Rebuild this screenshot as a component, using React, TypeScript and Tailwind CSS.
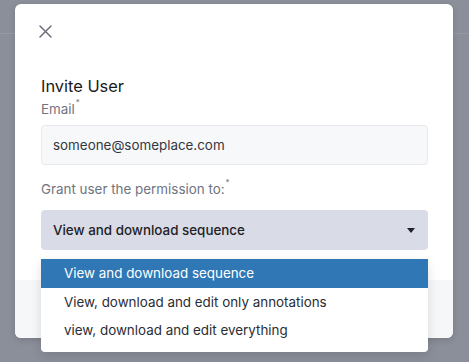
import React from "react";

export default function App() {
  return (
    <div
      className="relative w-[469px] h-[362px] overflow-hidden bg-[#8b8f99]"
      style={{ fontFamily: "'Inter', 'Inter Variable', 'Noto Sans', sans-serif" }}
    >
      <div className="absolute left-0 right-0 top-[33px] h-px bg-[#969aa3]" />
      <div className="relative ml-[15px] mt-[4px] w-[438px] h-[334px] rounded-md bg-white flex flex-col shadow-[0_2px_6px_rgba(0,0,0,0.15)]">
        <div className="flex-1 px-[26px]">
          <button className="mt-[17px] ml-[-6px] w-[20px] h-[20px] flex items-center justify-center text-[#6b6f7a]">
            <svg width="13" height="13" viewBox="0 0 13 13" fill="none" stroke="currentColor" strokeWidth="1.5" strokeLinecap="round">
              <path d="M1 1L12 12M12 1L1 12" />
            </svg>
          </button>
          <h2 className="mt-[33px] text-[16.4px] leading-[24px] text-[#1a1a1a]">Invite User</h2>
          <div className="mt-[1px] text-[13.4px] leading-[20px] text-[#6f7480]">
            Email<sup className="text-[8px] align-super ml-[1px] text-[#6f7480]">*</sup>
          </div>
          <div className="mt-[6px] h-[40px] w-[387px] rounded-[4px] border border-[#e8eaee] bg-[#f7f8fa] flex items-center px-[11px] text-[13.4px] text-[#333740]">
            someone@someplace.com
          </div>
          <div className="mt-[14px] text-[13.4px] leading-[20px] text-[#6f7480]">
            Grant user the permission to:<sup className="text-[8px] align-super ml-[1px] text-[#6f7480]">*</sup>
          </div>
          <div className="mt-[11px] h-[40px] w-[387px] rounded-[4px] bg-[#d9dce6] flex items-center justify-between px-[12px] text-[13.4px] font-medium text-[#1f2228]">
            <span>View and download sequence</span>
            <svg width="8" height="5" viewBox="0 0 8 5" className="mr-[1px]">
              <path d="M0 0H8L4 5Z" fill="#1f2228" />
            </svg>
          </div>
        </div>
        <div className="h-[58px] bg-[#f6f7f9] rounded-b-md" />
        <div className="absolute left-[26px] top-[255px] w-[387px] h-[93px] rounded-[4px] bg-white shadow-[0_4px_12px_rgba(0,0,0,0.12)] text-[13.4px]">
          <div className="h-[29px] bg-[#2f77b5] text-white flex items-center pl-[23px]">View and download sequence</div>
          <div className="h-[28px] text-[#2a2d33] flex items-center pl-[23px]">View, download and edit only annotations</div>
          <div className="h-[28px] text-[#2a2d33] flex items-center pl-[23px]">view, download and edit everything</div>
        </div>
      </div>
    </div>
  );
}
